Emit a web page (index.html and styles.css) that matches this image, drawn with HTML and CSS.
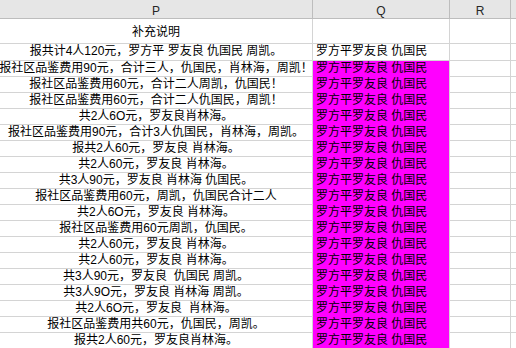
FILE: index.html
```html
<!DOCTYPE html>
<html lang="zh">
<head>
<meta charset="utf-8">
<link rel="stylesheet" href="styles.css">
</head>
<body>
<div class="sheet">
  <div class="hd">P</div><div class="hd">Q</div><div class="hd">R</div><div class="hd"></div>

  <div class="c p tall">补充说明</div><div class="c q"></div><div class="c"></div><div class="c"></div>
  <div class="c p">报共计4人120元，罗方平 罗友良 仇国民 周凯。</div><div class="c q">罗方平罗友良 仇国民</div><div class="c"></div><div class="c"></div>

  <div class="c p">报社区品鉴费用90元，合计三人，仇国民，肖林海，周凯！</div><div class="c q m">罗方平罗友良 仇国民</div><div class="c"></div><div class="c"></div>
  <div class="c p">报社区品鉴费用60元，合计二人周凯，仇国民！</div><div class="c q m">罗方平罗友良 仇国民</div><div class="c"></div><div class="c"></div>
  <div class="c p">报社区品鉴费用60元，合计二人仇国民，周凯！</div><div class="c q m">罗方平罗友良 仇国民</div><div class="c"></div><div class="c"></div>
  <div class="c p">共2人6O元，罗友良肖林海。</div><div class="c q m">罗方平罗友良 仇国民</div><div class="c"></div><div class="c"></div>
  <div class="c p">报社区品鉴费用90元，合计3人仇国民，肖林海，周凯。</div><div class="c q m">罗方平罗友良 仇国民</div><div class="c"></div><div class="c"></div>
  <div class="c p">报共2人60元，罗友良 肖林海。</div><div class="c q m">罗方平罗友良 仇国民</div><div class="c"></div><div class="c"></div>
  <div class="c p">共2人60元，罗友良 肖林海。</div><div class="c q m">罗方平罗友良 仇国民</div><div class="c"></div><div class="c"></div>
  <div class="c p">共3人90元，罗友良 肖林海 仇国民。</div><div class="c q m">罗方平罗友良 仇国民</div><div class="c"></div><div class="c"></div>
  <div class="c p">报社区品鉴费用60元，周凯，仇国民合计二人</div><div class="c q m">罗方平罗友良 仇国民</div><div class="c"></div><div class="c"></div>
  <div class="c p">共2人6O元，罗友良 肖林海。</div><div class="c q m">罗方平罗友良 仇国民</div><div class="c"></div><div class="c"></div>
  <div class="c p">报社区品鉴费用60元周凯，仇国民。</div><div class="c q m">罗方平罗友良 仇国民</div><div class="c"></div><div class="c"></div>
  <div class="c p">共2人60元，罗友良 肖林海。</div><div class="c q m">罗方平罗友良 仇国民</div><div class="c"></div><div class="c"></div>
  <div class="c p">共2人60元，罗友良 肖林海。</div><div class="c q m">罗方平罗友良 仇国民</div><div class="c"></div><div class="c"></div>
  <div class="c p">共3人90元，罗友良  仇国民 周凯。</div><div class="c q m">罗方平罗友良 仇国民</div><div class="c"></div><div class="c"></div>
  <div class="c p">共3人9O元，罗友良 肖林海 周凯。</div><div class="c q m">罗方平罗友良 仇国民</div><div class="c"></div><div class="c"></div>
  <div class="c p">共2人6O元，罗友良  肖林海。</div><div class="c q m">罗方平罗友良 仇国民</div><div class="c"></div><div class="c"></div>
  <div class="c p">报社区品鉴费用共60元，仇国民，周凯。</div><div class="c q m">罗方平罗友良 仇国民</div><div class="c"></div><div class="c"></div>
  <div class="c p">报共2人60元，罗友良肖林海。</div><div class="c q m">罗方平罗友良 仇国民</div><div class="c"></div><div class="c"></div>
</div>
</body>
</html>
```

FILE: styles.css
```css
html, body {
  margin: 0;
  padding: 0;
  background: #ffffff;
  overflow: hidden;
}

.sheet {
  display: grid;
  grid-template-columns: 312px 136px 60px 1fr;
  grid-template-rows: 18px 24px 16px repeat(18, 15px);
  gap: 1px;
  width: 516px;
  height: 348px;
  background: #d4d4d4;
  overflow: hidden;
}

.hd {
  background: #e6e6e6;
  color: #262626;
  font-family: "Liberation Sans", Arial, sans-serif;
  font-size: 12px;
  line-height: 14px;
  padding-top: 4px;
  text-align: center;
  box-shadow: 1px 0 0 #bdbdbd, 0 1px 0 #bdbdbd, 1px 1px 0 #bdbdbd;
}

.c {
  background: #ffffff;
  color: #000000;
  font-family: "Liberation Sans", "Noto Sans CJK SC", sans-serif;
  font-size: 12px;
  line-height: 12px;
  padding-top: 1px;
  white-space: pre;
  overflow: hidden;
  display: flex;
  align-items: flex-start;
}

.p {
  justify-content: center;
}

.tall {
  padding-top: 7px;
}

.q {
  justify-content: flex-start;
  padding-left: 3px;
}

.m {
  background: #ff00ff;
  box-shadow: 0 1px 0 #ff00ff;
}
```
